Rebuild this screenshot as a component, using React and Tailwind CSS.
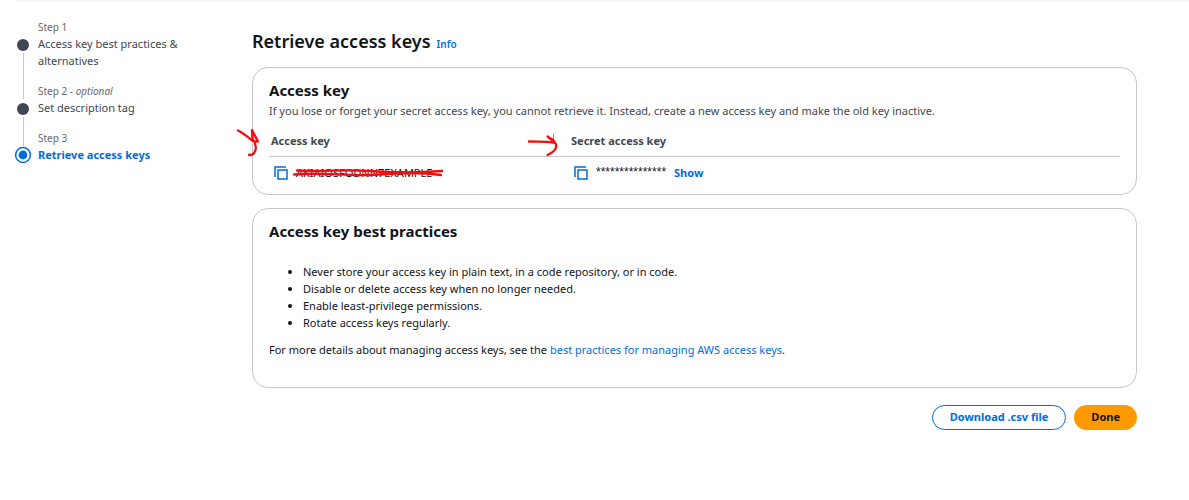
import React from "react";

function CopyIcon() {
  return (
    <svg viewBox="0 0 14 14" className="size-3.5" fill="none" stroke="currentColor" strokeWidth="1.5" aria-hidden="true">
      <path d="M1 11V1h11" />
      <path d="M4 4h9v9H4z" />
    </svg>
  );
}

function CopyButton({ label }) {
  return (
    <button type="button" aria-label={label} className="text-[#006ce0]">
      <CopyIcon />
    </button>
  );
}

function Step({ number, optional, title, state, last }) {
  const active = state === "active";
  return (
    <li className={last ? "flex" : "flex pb-[15px]"}>
      <div className="relative flex w-6 shrink-0 flex-col items-center pt-[15px]">
        {active ? (
          <svg viewBox="0 0 18 18" className="size-[18px] shrink-0" aria-hidden="true">
            <circle cx="9" cy="9" r="7.4" fill="none" stroke="#006ce0" strokeWidth="1.5" />
            <circle cx="9" cy="9" r="4.4" fill="#006ce0" />
          </svg>
        ) : (
          <>
            <span className="mt-1 size-3 shrink-0 rounded-full bg-[#424650]" />
            <span className="absolute top-[33px] -bottom-[30px] w-px bg-[#c6c6cd]" />
          </>
        )}
      </div>
      <div className="w-[160px] pl-[3px]">
        <p className="text-[10px] leading-[14px] text-[#656871]">
          Step {number}
          {optional && <> - <em>optional</em></>}
        </p>
        <a
          href="#step"
          aria-current={active ? "step" : undefined}
          className={active ? "block pt-px font-bold text-[#006ce0]" : "block pt-px text-[#424650]"}
        >
          {title}
        </a>
      </div>
    </li>
  );
}

export default function App() {
  return (
    <div className="relative bg-white font-['Noto_Sans','Open_Sans',sans-serif] text-[11px] leading-[17px] text-[#0f141a]">
      <div className="ml-4 h-[3px] bg-linear-to-b from-[#f4f4f5] to-white" />
      <div className="flex pt-[17px] pr-[52px] pl-[11px]">
        <nav aria-label="Steps" className="w-[241px] shrink-0">
          <ol>
            <Step number="1" title="Access key best practices & alternatives" />
            <Step number="2" optional title="Set description tag" />
            <Step number="3" title="Retrieve access keys" state="active" last />
          </ol>
        </nav>
        <main className="min-w-0 flex-1 pt-[9px]">
          <div className="flex items-baseline gap-1.5">
            <h1 className="text-[18px] leading-6 font-semibold">Retrieve access keys</h1>
            <a href="#info" className="text-[10px] font-semibold text-[#006ce0]">Info</a>
          </div>

          <section className="mt-3.5 rounded-2xl border border-[#c6c6cd] px-4 pt-3 pb-[5px]">
            <h2 className="text-[15px] leading-5 font-bold">Access key</h2>
            <p className="pt-[2px] text-[#424650]">
              If you lose or forget your secret access key, you cannot retrieve it. Instead, create a new access key and make the old key inactive.
            </p>
            <table className="mt-3 w-full table-fixed text-left">
              <thead>
                <tr className="border-b border-[#c6c6cd] text-[#424650]">
                  <th className="w-[300px] pt-px pb-[7px] pl-[2px] font-bold">Access key</th>
                  <th className="pt-px pb-[7px] pl-[2px] font-bold">Secret access key</th>
                </tr>
              </thead>
              <tbody>
                <tr>
                  <td className="pt-[7px] pb-2 pl-[5px]">
                    <div className="flex items-center gap-2">
                      <CopyButton label="Copy access key" />
                      <span>AKIAIOSFODNN7EXAMPLE</span>
                    </div>
                  </td>
                  <td className="pt-[7px] pb-2 pl-[5px]">
                    <div className="flex items-center gap-2">
                      <CopyButton label="Copy secret access key" />
                      <span className="font-['Liberation_Sans',sans-serif] text-[12px]">***************</span>
                      <button type="button" className="font-bold text-[#006ce0]">Show</button>
                    </div>
                  </td>
                </tr>
              </tbody>
            </table>
          </section>

          <section className="mt-[13px] rounded-2xl border border-[#c6c6cd] px-4 pt-3 pb-[29px]">
            <h2 className="text-[15px] leading-5 font-bold">Access key best practices</h2>
            <ul className="list-disc pt-[22px] pl-[34px]">
              <li>Never store your access key in plain text, in a code repository, or in code.</li>
              <li>Disable or delete access key when no longer needed.</li>
              <li>Enable least-privilege permissions.</li>
              <li>Rotate access keys regularly.</li>
            </ul>
            <p className="pt-2.5">
              For more details about managing access keys, see the{" "}
              <a href="#practices" className="text-[#006ce0]">best practices for managing AWS access keys</a>.
            </p>
          </section>

          <div className="flex justify-end gap-2 pt-[17px]">
            <button type="button" className="rounded-full border border-[#006ce0] px-[17px] pt-[2px] pb-1 font-bold text-[#006ce0]">
              Download .csv file
            </button>
            <button type="button" className="rounded-full bg-[#ff9900] px-[17px] pt-[3px] pb-[5px] font-bold">Done</button>
          </div>
        </main>
      </div>

      <svg
        viewBox="0 0 330 60"
        className="pointer-events-none absolute top-[125px] left-[235px] h-[60px] w-[330px]"
        fill="none"
        stroke="#fa0a0a"
        strokeWidth="2.3"
        strokeLinecap="round"
        strokeLinejoin="round"
        aria-hidden="true"
      >
        <path d="M318.500 9V17" stroke="#8c8c94" strokeWidth="1" />
        <path d="M3 5.500C8 8 13 12 18 16L23 16.500L17 5L17.500 14C21 18 22 25 19 28C18 30 16 30 14 30" />
        <path d="M294 16.500C303 17 311 16 320 18L312.500 11.500L318 15C323 20 323 25 312.500 30" />
        <path d="M62 45.500C90 47 110 44 135 46S180 48 207 46" />
        <path d="M59 49.500C85 47 110 51 135 50S180 46 206 50" />
        <path d="M145 47.500L190 48" />
      </svg>
    </div>
  );
}
